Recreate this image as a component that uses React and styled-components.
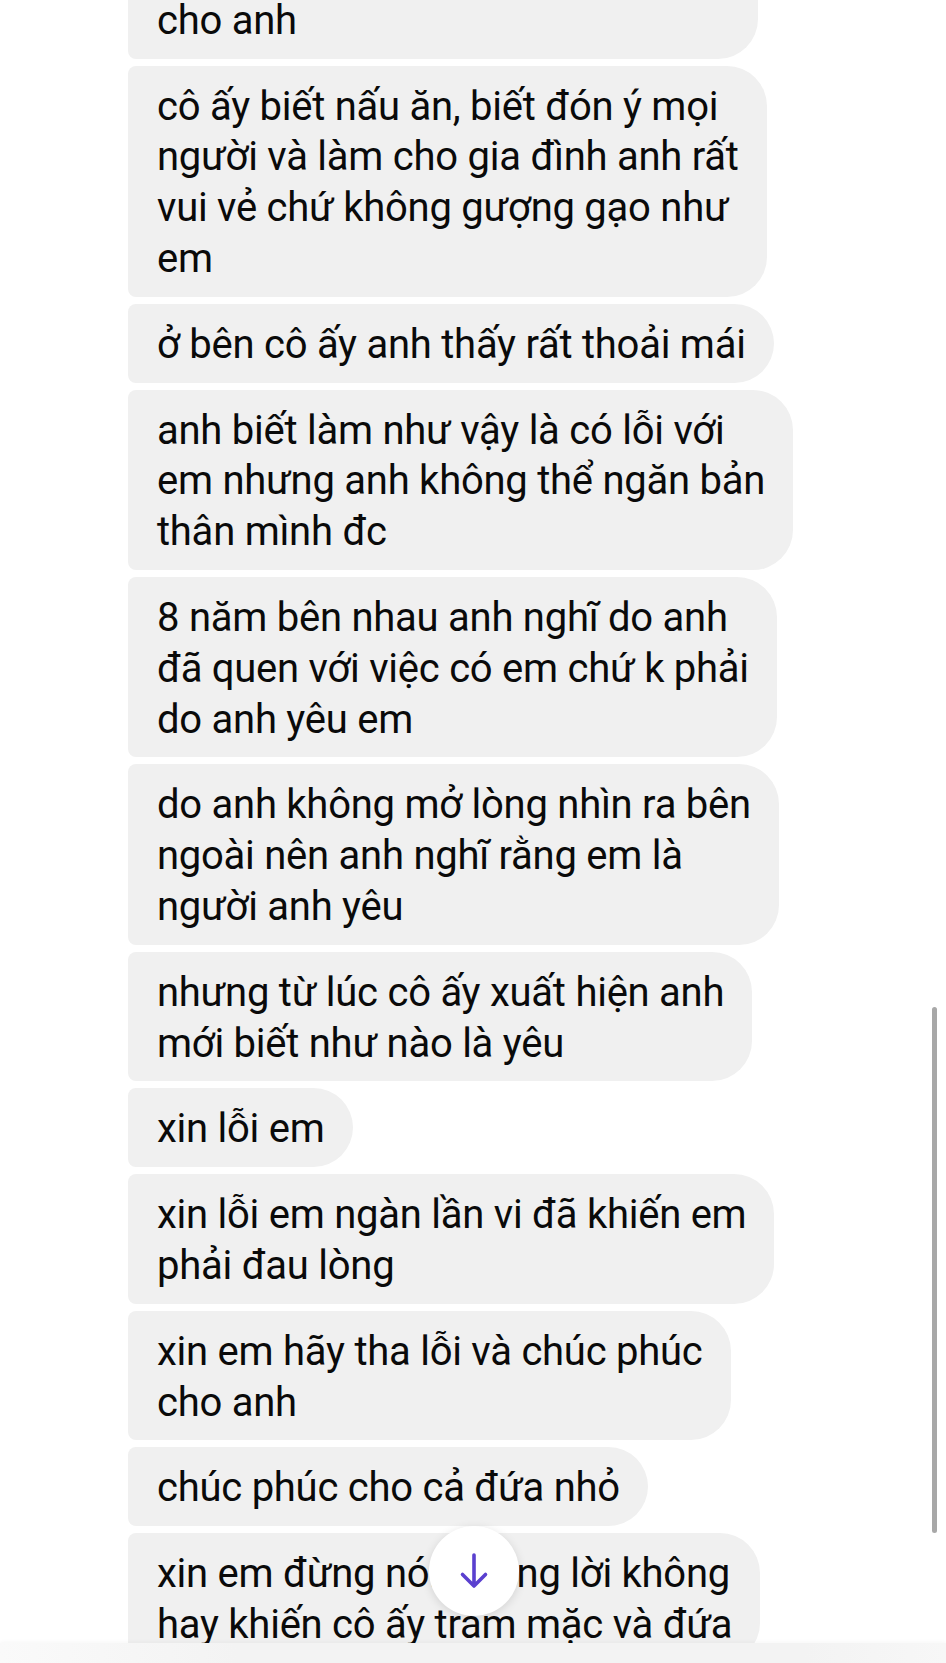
import styled, { createGlobalStyle } from "styled-components";

const GlobalStyle = createGlobalStyle`
  html, body {
    margin: 0;
    padding: 0;
    background: #ffffff;
  }
`;

const Screen = styled.div`
  position: relative;
  height: 100vh;
  overflow: hidden;
  background: #ffffff;
`;

/* the thread is scrolled: the first bubble starts above the viewport */
const Thread = styled.div`
  display: flex;
  flex-direction: column;
  align-items: flex-start;
  gap: 7px;
  margin-top: -71px;
  padding-left: 128px;
`;

const Bubble = styled.div`
  background: #f0f0f0;
  border-radius: 8px 40px 40px 8px;
  padding: 16px 28px 12px 29px;
  color: #0a0a0a;
  font-family: Roboto, "Liberation Sans", sans-serif;
  font-size: 40px;
  letter-spacing: -0.25px;
  line-height: 50.8px;
`;

const Line = styled.span`
  display: block;
  white-space: nowrap;
`;

const ScrollThumb = styled.div`
  position: absolute;
  top: 1007px;
  left: 932px;
  width: 5px;
  height: 526px;
  border-radius: 3px;
  background: #a8a8a8;
`;

const JumpButton = styled.button`
  position: absolute;
  top: 1526px;
  left: 429px;
  width: 90px;
  height: 90px;
  border: none;
  border-radius: 50%;
  background: #ffffff;
  box-shadow: 0 2px 10px rgba(0, 0, 0, 0.12);
  display: flex;
  align-items: center;
  justify-content: center;
  padding: 0;
`;

const Composer = styled.div`
  position: absolute;
  left: 0;
  right: 0;
  bottom: 0;
  height: 20px;
  background: linear-gradient(to right, #fafafa 0%, #f3f3f3 25%, #f3f3f3 85%, #f7f7f7 100%);
  box-shadow: 0 -1px 4px rgba(0, 0, 0, 0.04);
`;

const messages = [
  ["anh mong em hiểu và thông cảm", "cho anh"],
  [
    "cô ấy biết nấu ăn, biết đón ý mọi",
    "người và làm cho gia đình anh rất",
    "vui vẻ chứ không gượng gạo như",
    "em",
  ],
  ["ở bên cô ấy anh thấy rất thoải mái"],
  [
    "anh biết làm như vậy là có lỗi với",
    "em nhưng anh không thể ngăn bản",
    "thân mình đc",
  ],
  [
    "8 năm bên nhau anh nghĩ do anh",
    "đã quen với việc có em chứ k phải",
    "do anh yêu em",
  ],
  [
    "do anh không mở lòng nhìn ra bên",
    "ngoài nên anh nghĩ rằng em là",
    "người anh yêu",
  ],
  ["nhưng từ lúc cô ấy xuất hiện anh", "mới biết như nào là yêu"],
  ["xin lỗi em"],
  ["xin lỗi em ngàn lần vi đã khiến em", "phải đau lòng"],
  ["xin em hãy tha lỗi và chúc phúc", "cho anh"],
  ["chúc phúc cho cả đứa nhỏ"],
  ["xin em đừng nói những lời không", "hay khiến cô ấy trăm mặc và đứa"],
];

function DownArrow() {
  return (
    <svg width="30" height="36" viewBox="0 0 30 36" fill="none">
      <path
        d="M15 2 V33 M3.5 21.5 L15 33 L26.5 21.5"
        stroke="#5a40cf"
        strokeWidth="3.6"
        strokeLinecap="round"
        strokeLinejoin="round"
      />
    </svg>
  );
}

export default function App() {
  return (
    <>
      <GlobalStyle />
      <Screen>
        <Thread>
          {messages.map((lines, i) => (
            <Bubble key={i}>
              {lines.map((text) => (
                <Line key={text}>{text}</Line>
              ))}
            </Bubble>
          ))}
        </Thread>
        <ScrollThumb />
        <JumpButton aria-label="Cuộn xuống">
          <DownArrow />
        </JumpButton>
        <Composer />
      </Screen>
    </>
  );
}
